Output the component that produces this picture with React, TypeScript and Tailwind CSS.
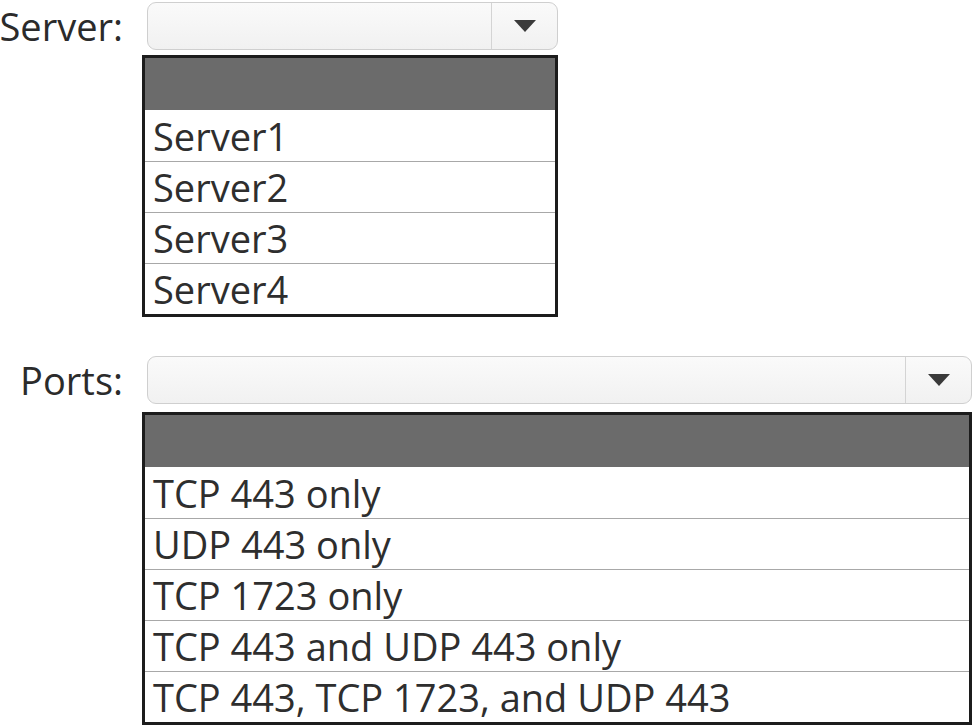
const serverOptions = ['Server1', 'Server2', 'Server3', 'Server4'];
const portOptions = [
  'TCP 443 only',
  'UDP 443 only',
  'TCP 1723 only',
  'TCP 443 and UDP 443 only',
  'TCP 443, TCP 1723, and UDP 443',
];

const Caret = () => (
  <svg width="26" height="16" viewBox="0 0 26 16">
    <path d="M2 2 L24 2 L13 14 Z" fill="#3a3a3a" />
  </svg>
);

const DropField = ({
  label,
  options,
  width,
  listGap,
}: {
  label: string;
  options: string[];
  width: string;
  listGap: string;
}) => {
  return (
    <div className="flex items-start">
      <div className="w-[142px] shrink-0 pr-[19px] text-right h-[48px] flex items-center justify-end text-[38px] leading-none text-[#2b2b2b]">
        {label}
      </div>
      <div className={`flex flex-col ${width}`}>
        {/* closed select */}
        <div className="ml-[5px] h-[48px] flex rounded-[9px] border border-[#cfcfcf] bg-gradient-to-b from-[#fafafa] to-[#f1f1f1]">
          <div className="flex-1" />
          <div className="w-[66px] border-l border-[#d4d4d4] flex items-center justify-center">
            <Caret />
          </div>
        </div>
        {/* open list */}
        <div className={`${listGap} border-[3px] border-[#1c1c1c] bg-white`}>
          <div className="h-[52px] bg-[#6b6b6b]" />
          {options.map((opt, i) => (
            <div
              key={opt}
              className={`h-[51px] flex items-center pl-[8px] text-[38px] leading-none text-[#2e2e2e] ${i > 0 ? 'border-t border-[#a8a8a8]' : ''}`}
            >
              {opt}
            </div>
          ))}
        </div>
      </div>
    </div>
  );
};

export default function App() {
  return (
    <div className="w-[974px] h-[726px] bg-white overflow-hidden font-['Open_Sans',sans-serif] pt-[2px]">
      <DropField label="Server:" options={serverOptions} width="w-[416px]" listGap="mt-[5px]" />
      <div className="h-[39px]" />
      <DropField label="Ports:" options={portOptions} width="w-[830px]" listGap="mt-[8px]" />
    </div>
  );
}
